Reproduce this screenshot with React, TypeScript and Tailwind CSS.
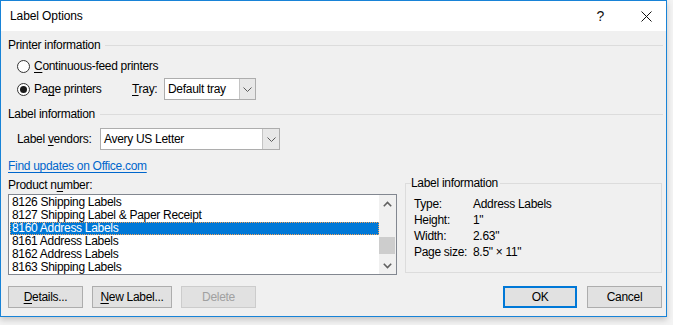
import React from "react";

function Radio({ checked }: { checked?: boolean }) {
  return (
    <span className="w-[13px] h-[13px] rounded-full border border-[#333333] bg-white flex items-center justify-center shrink-0">
      {checked && <span className="w-[7px] h-[7px] rounded-full bg-[#1a1a1a]" />}
    </span>
  );
}

function ComboChevron() {
  return (
    <svg width="9" height="5" viewBox="0 0 9 5">
      <path d="M0.5 0.5 L4.5 4.5 L8.5 0.5" fill="none" stroke="#5a5a5a" strokeWidth="1" />
    </svg>
  );
}

function ScrollArrow({ up }: { up?: boolean }) {
  return (
    <svg width="9" height="6" viewBox="0 0 9 6">
      <path
        d={up ? "M0.8 5.2 L4.5 1.5 L8.2 5.2" : "M0.8 0.8 L4.5 4.5 L8.2 0.8"}
        fill="none"
        stroke="#606060"
        strokeWidth="1.6"
      />
    </svg>
  );
}

function Header({ title }: { title: string }) {
  return (
    <div className="flex items-center h-[16px] gap-[5px]">
      <span>{title}</span>
      <div className="flex-1 h-px bg-[#dcdcdc]" />
    </div>
  );
}

const rows = [
  "8126 Shipping Labels",
  "8127 Shipping Label & Paper Receipt",
  "8160 Address Labels",
  "8161 Address Labels",
  "8162 Address Labels",
  "8163 Shipping Labels",
];

const info: [string, string][] = [
  ["Type:", "Address Labels"],
  ["Height:", "1\""],
  ["Width:", "2.63\""],
  ["Page size:", "8.5\" \u00d7 11\""],
];

export default function App() {
  return (
    <div className="w-[673px] h-[325px] bg-[#f3f3f3] font-['Liberation_Sans',Arial,sans-serif] text-[12px] leading-[16px] text-black tracking-[-0.3px]">
      <div className="w-[667px] h-[317px] border border-[#1883d7] flex flex-col bg-[#f0f0f0] shadow-[0_3px_6px_rgba(0,0,0,0.18)]">
        {/* Title bar */}
        <div className="h-[30px] bg-white flex items-center pl-[9px] shrink-0">
          <span className="tracking-[-0.1px]">Label Options</span>
          <div className="flex-1" />
          <span className="text-[14px] text-[#111]">?</span>
          <svg className="ml-[37px] mr-[14px]" width="11" height="11" viewBox="0 0 11 11">
            <path d="M0.5 0.5 L10.5 10.5 M10.5 0.5 L0.5 10.5" stroke="#111" strokeWidth="1" fill="none" />
          </svg>
        </div>

        {/* Body */}
        <div className="flex-1 flex flex-col pl-[7px] pr-[3px]">
          <div className="mt-[6px]">
            <Header title="Printer information" />
          </div>

          <div className="mt-[5px] h-[16px] flex items-center ml-[9px] gap-[4px]">
            <Radio />
            <span>
              <u className="underline-offset-[2px]">C</u>ontinuous-feed printers
            </span>
          </div>

          <div className="mt-[4px] h-[22px] flex items-center">
            <div className="ml-[9px] w-[115px] flex items-center gap-[4px]">
              <Radio checked />
              <span>
                Pa<u className="underline-offset-[2px]">g</u>e printers
              </span>
            </div>
            <span className="w-[32px]">
              <u className="underline-offset-[2px]">T</u>ray:
            </span>
            <div className="w-[92px] h-[22px] border border-[#adadad] bg-white flex">
              <div className="flex-1 flex items-center pl-[3px]">Default tray</div>
              <div className="w-[16px] border-l border-[#c4c4c4] bg-[#e8e8e8] flex items-center justify-center">
                <ComboChevron />
              </div>
            </div>
          </div>

          <div className="mt-[6px]">
            <Header title="Label information" />
          </div>

          <div className="mt-[6px] h-[22px] flex items-center">
            <span className="ml-[9px] w-[83px]">
              Label <u className="underline-offset-[2px]">v</u>endors:
            </span>
            <div className="w-[180px] h-[22px] border border-[#adadad] bg-white flex">
              <div className="flex-1 flex items-center pl-[3px]">Avery US Letter</div>
              <div className="w-[17px] border-l border-[#c4c4c4] bg-[#e8e8e8] flex items-center justify-center">
                <ComboChevron />
              </div>
            </div>
          </div>

          <div className="mt-[8px] h-[16px] flex items-center">
            <span className="text-[#0066cc] underline underline-offset-[2px]">Find updates on Office.com</span>
          </div>

          <div className="mt-[3px] flex items-start">
            {/* Left column */}
            <div className="flex flex-col">
              <div className="h-[16px] flex items-center">
                <span>
                  Product n<u className="underline-offset-[2px]">u</u>mber:
                </span>
              </div>
              <div className="mt-[1px] w-[389px] h-[81px] border border-[#828790] bg-white flex">
                <div className="flex-1 pt-[1px] pl-[1px]">
                  {rows.map((r, i) =>
                    i === 2 ? (
                      <div
                        key={r}
                        className="h-[13px] leading-[13px] pl-[1px] bg-[#0078d7] text-white border border-dotted border-[#f2a35a] flex items-center"
                      >
                        {r}
                      </div>
                    ) : (
                      <div key={r} className="h-[13px] leading-[13px] pl-[2px] flex items-center">
                        {r}
                      </div>
                    )
                  )}
                </div>
                <div className="w-[17px] bg-[#f0f0f0] flex flex-col">
                  <div className="h-[17px] flex items-center justify-center">
                    <ScrollArrow up />
                  </div>
                  <div className="flex-1 flex flex-col">
                    <div className="mt-[25px] h-[17px] bg-[#cdcdcd] mr-[1px]" />
                  </div>
                  <div className="h-[17px] flex items-center justify-center">
                    <ScrollArrow />
                  </div>
                </div>
              </div>
            </div>

            {/* Right column */}
            <fieldset className="ml-[8px] mt-[-2px] w-[257px] border border-[#dcdcdc] pl-[8px] pt-[5px] pb-[12px]">
              <legend className="ml-[-3px] pr-[2px] h-[16px] leading-[16px]">Label information</legend>
              {info.map(([k, v]) => (
                <div key={k} className="h-[16px] flex items-center">
                  <span className="w-[59px]">{k}</span>
                  <span>{v}</span>
                </div>
              ))}
            </fieldset>
          </div>

          <div className="mt-[11px] flex items-center">
            <button className="w-[75px] h-[22px] border border-[#adadad] bg-[#e1e1e1] flex items-center justify-center">
              <span>
                <u className="underline-offset-[2px]">D</u>etails...
              </span>
            </button>
            <button className="ml-[9px] w-[80px] h-[22px] border border-[#adadad] bg-[#e1e1e1] flex items-center justify-center">
              <span>
                <u className="underline-offset-[2px]">N</u>ew Label...
              </span>
            </button>
            <button className="ml-[9px] w-[75px] h-[22px] border border-[#cccccc] bg-[#e1e1e1] text-[#a0a0a0] flex items-center justify-center">
              Delete
            </button>
            <div className="flex-1" />
            <button className="w-[74px] h-[22px] border-2 border-[#0078d7] bg-[#e1e1e1] flex items-center justify-center">
              OK
            </button>
            <button className="ml-[10px] w-[75px] h-[22px] border border-[#adadad] bg-[#e1e1e1] flex items-center justify-center mr-[1px]">
              Cancel
            </button>
          </div>
        </div>
      </div>
    </div>
  );
}
